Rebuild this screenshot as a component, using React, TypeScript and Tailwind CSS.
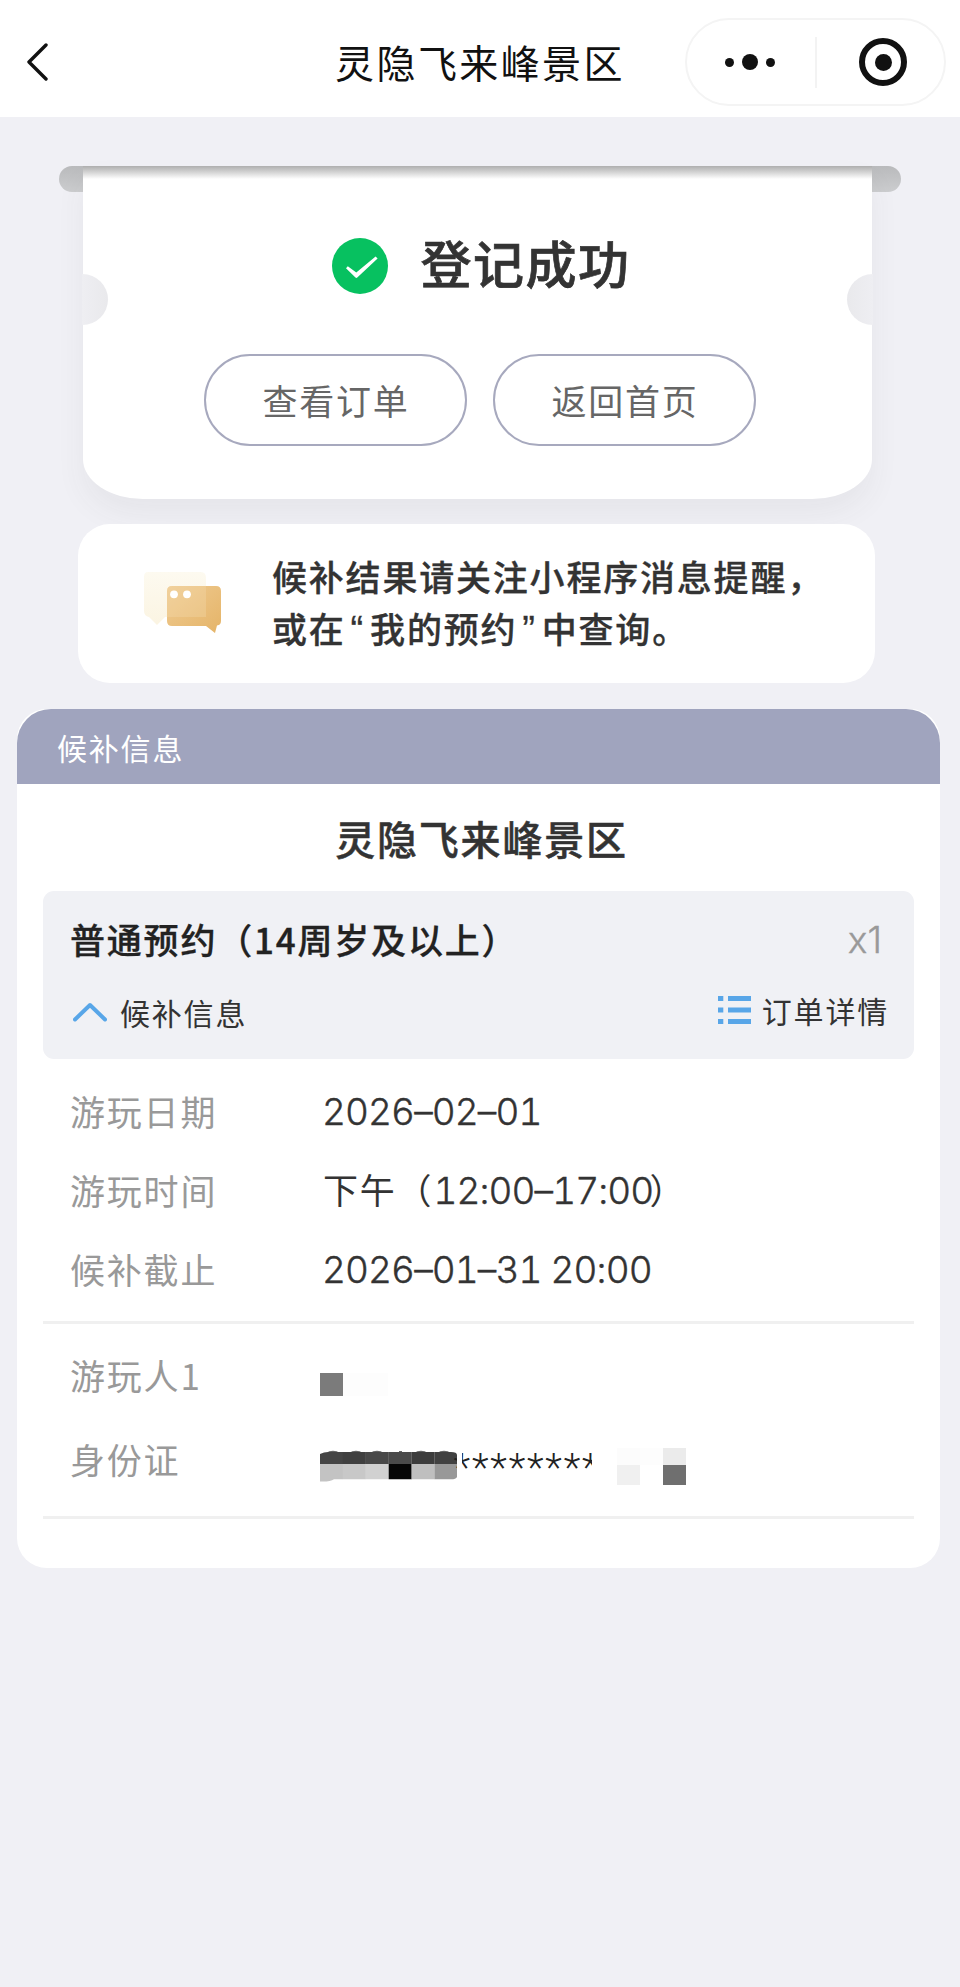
import React from "react";

interface RowProps {
  label: string;
  className: string;
  children: React.ReactNode;
}

const CheckIcon = () => (
  <svg className="size-14 shrink-0" viewBox="0 0 56 56" fill="none">
    <circle cx="28" cy="28" r="28" fill="#07c160" />
    <path d="M14 30.3L15.8 28.2L24.3 34.4L43.6 18.4L45.6 20.4L25.3 39.6Q24.2 40.3 23.2 39.3Z" fill="#fff" />
  </svg>
);

const ChatIcon = () => (
  <svg className="h-[66px] w-[80px] shrink-0" viewBox="0 0 80 66">
    <defs>
      <linearGradient id="bubble" x1="0" y1="0" x2="1" y2="1">
        <stop offset="0" stopColor="#efcb92" />
        <stop offset="1" stopColor="#e5b468" />
      </linearGradient>
      <linearGradient id="back" x1="0" y1="0" x2="0" y2="1">
        <stop offset="0" stopColor="#fdfaf0" />
        <stop offset="1" stopColor="#fbf4e2" />
      </linearGradient>
    </defs>
    <path d="M5 1H58Q63 1 63 7V46H22L14 54L6 46Q1 45 1 40V6Q1 1 5 1Z" fill="url(#back)" />
    <path d="M29 15H73Q78 15 78 20V50Q78 54 74 54.5L72 62L63 55H29Q24 55 24 50V20Q24 15 29 15Z" fill="url(#bubble)" />
    <path d="M29 15H63V46H24V20Q24 15 29 15Z" fill="#f6dfb2" opacity="0.3" />
    <circle cx="31" cy="23.3" r="3.9" fill="#fff" />
    <circle cx="44" cy="23.3" r="3.9" fill="#fff" />
  </svg>
);

const ListIcon = () => (
  <svg className="h-[30px] w-[33px]" viewBox="0 0 33 30" fill="#58a6e8">
    <path d="M0 1H5.3V6H0zM10 1H33V6H10zM0 12.5H5.3V17.5H0zM10 12.5H33V17.5H10zM0 24H5.3V29H0zM10 24H33V29H10z" />
  </svg>
);

const maskCells = [
  { top: "#454545", bottom: "#c3c3c3" },
  { top: "#404040", bottom: "#c8c8c8" },
  { top: "#494949", bottom: "#d1d1d1" },
  { top: "#4b4b4b", bottom: "#060606" },
  { top: "#3d3d3d", bottom: "#bfbfbf" },
  { top: "#414141", bottom: "#989898" },
];

const MaskLeft = () => (
  <svg className="h-[32px] w-[137px] shrink-0" viewBox="0 0 137 32">
    <clipPath id="mask">
      <path d="M0 4Q4 2 8 2H131Q137 2 137 5V27Q136 29.3 131 29.3H14Q10 32 0 31.5Z" />
    </clipPath>
    {[13, 36, 57, 101, 124].map((x) => (
      <ellipse key={x} cx={x} cy="2.4" rx="5" ry="1.7" fill="#666" />
    ))}
    <rect x="79" y="1" width="3" height="2" fill="#666" />
    <g clipPath="url(#mask)">
      {maskCells.map((cell, index) => (
        <g key={index}>
          <rect x={index * 22.9} y="0" width="23" height="14" fill={cell.top} />
          <rect x={index * 22.9} y="14" width="23" height="18" fill={cell.bottom} />
        </g>
      ))}
    </g>
  </svg>
);

const Row: React.FC<RowProps> = ({ label, className, children }) => (
  <div className={`flex items-center pl-[27px] ${className}`}>
    <span className="w-[253px] shrink-0 text-[#999]">{label}</span>
    {children}
  </div>
);

const num = "font-[Inter] text-[37px] font-light tabular-nums tracking-[-0.9px] [-webkit-text-stroke:0.4px]";
const quote = "px-[5px] font-['Liberation_Sans'] text-[38px] leading-none";

const App = () => {
  const details = [
    { label: "游玩日期", value: <span className={`-ml-px ${num}`}>2026–02–01</span> },
    { label: "游玩时间", value: <span>下午（<span className={num}>12:00–17:00</span><span className="-ml-1">）</span></span> },
    { label: "候补截止", value: <span className={`-ml-px ${num}`}>2026–01–31 20:00</span> },
  ];

  return (
    <div className="h-[1987px] w-[960px] overflow-hidden bg-[#f0f0f5] font-['Noto_Sans_CJK_SC',sans-serif] text-[35px] tracking-[1.8px] text-[#333]">
      <header className="relative flex h-[117px] items-center justify-center bg-white pt-1.5">
        <svg className="absolute top-[43px] left-[27px] h-[38px] w-[21px]" viewBox="0 0 21 38" fill="none">
          <path d="M19 2L2 19L19 36" stroke="#111" strokeWidth="3.4" strokeLinecap="round" strokeLinejoin="round" />
        </svg>
        <h1 className="text-[39px] tracking-[2.4px] text-[#111]">灵隐飞来峰景区</h1>
        <div className="absolute top-[18px] right-[14px] flex h-[88px] w-[261px] items-center rounded-full border-2 border-[#f4f4f4]">
          <div className="flex h-[51px] w-[130px] items-center justify-center gap-2 border-r-2 border-[#f3f3f3] pr-0.5">
            <i className="size-[9px] rounded-full bg-[#111]" />
            <i className="size-4 rounded-full bg-[#111]" />
            <i className="size-[9px] rounded-full bg-[#111]" />
          </div>
          <div className="ml-[42px] flex size-12 items-center justify-center rounded-full border-[6px] border-[#111]">
            <i className="size-[17px] rounded-full bg-[#111]" />
          </div>
        </div>
      </header>

      <section className="relative mx-auto mt-[49px] h-[333px] w-[842px]">
        <div className="absolute inset-x-0 top-0 h-[26px] rounded-full bg-linear-to-b from-[#b9babc] to-[#cccdcf]" />
        <div className="relative mr-[29px] ml-6 h-full rounded-b-[60px_40px] bg-white pt-[69px] shadow-[0_16px_30px_rgba(60,60,70,0.06)]">
          <div className="absolute inset-x-0 top-0 h-[13px] bg-linear-to-b from-[#aeaeae] to-white" />
          <div className="absolute top-[108px] -left-px h-[51px] w-[26px] rounded-r-full bg-linear-to-r from-[#eeeef2] to-[#e9e9ec]" />
          <div className="absolute top-[108px] -right-px h-[51px] w-[26px] rounded-l-full bg-linear-to-l from-[#eeeef2] to-[#e9e9ec]" />
          <div className="flex h-[62px] items-center justify-center gap-8 pl-2">
            <CheckIcon />
            <h2 className="-mt-2 text-[51px] leading-none font-medium tracking-[1.5px] [-webkit-text-stroke:0.7px]">登记成功</h2>
          </div>
          <div className="mt-[57px] flex justify-center gap-[26px] pl-[4px]">
            <button className="h-[92px] w-[263px] rounded-full border-2 border-[#a7a9be] pl-0.5 text-[#666]">查看订单</button>
            <button className="h-[92px] w-[263px] rounded-full border-2 border-[#a7a9be] pl-0.5 text-[#666]">返回首页</button>
          </div>
        </div>
      </section>

      <section className="relative mt-[25px] ml-[78px] flex h-[159px] w-[797px] items-center rounded-[32px] bg-white pl-[65px]">
        <ChatIcon />
        <p className="-mt-[3px] ml-[49px] leading-[52px] font-medium whitespace-nowrap [-webkit-text-stroke:0.3px]">
          候补结果请关注小程序消息提醒，
          <br />
          或在<span className={quote}>“</span>我的预约
          <span className={quote}>”</span>中查询。
        </p>
      </section>

      <main className="mt-[26px] ml-[17px] h-[859px] w-[923px] rounded-[30px] bg-white">
        <div className="flex h-[75px] items-center rounded-t-[34px] bg-[#a0a4be] pt-0.5 pl-10 text-[30px] text-white">
          候补信息
        </div>
        <div className="px-[26px]">
          <h2 className="flex h-[107px] items-center justify-center pl-1.5 text-[40px] font-medium tracking-[1.8px] [-webkit-text-stroke:0.5px]">灵隐飞来峰景区</h2>
          <div className="h-[168px] rounded-[11px] bg-[#f0f1f5] pr-7 pl-[27px] pt-[24px] text-[#222]">
            <div className="flex h-[48px] items-center justify-between font-medium">
              <span className="[-webkit-text-stroke:0.3px]">普通预约（14周岁及以上）</span>
              <span className="pt-0.5 pr-1 font-[Inter] text-[37px] font-light tracking-normal text-[#999] [-webkit-text-stroke:0.4px]">x1</span>
            </div>
            <div className="mt-[24px] flex h-[50px] items-center text-[30px] text-[#333]">
              <svg className="mr-[13px] ml-[3px] h-[20px] w-[34px]" viewBox="0 0 34 20" fill="none">
                <path d="M2 17.5L17 3L32 17.5" stroke="#58a6e8" strokeWidth="4" strokeLinecap="round" strokeLinejoin="round" />
              </svg>
              <span>候补信息</span>
              <span className="-mt-1 -mr-[3px] ml-auto flex items-center gap-[11px]">
                <ListIcon />
                订单详情
              </span>
            </div>
          </div>

          <div className="h-[265px] border-b-[3px] border-[#f0f0f0] pt-[13px]">
            {details.map((item) => (
              <Row key={item.label} label={item.label} className="h-[79px]">
                {item.value}
              </Row>
            ))}
          </div>

          <div className="h-[195px] border-b-[3px] border-[#f0f0f0] pt-[9px]">
            <Row label="游玩人1" className="h-[84px]">
              <span className="mt-[19px] -ml-[3px] size-[23px] bg-[#7b7b7b]" />
              <span className="mt-[19px] h-[23px] w-[45px] bg-[#fdfdfd]" />
            </Row>
            <Row label="身份证" className="h-[84px]">
              <div className="-ml-[3px] flex items-center pt-[14px]">
                <MaskLeft />
                <div className="relative -ml-[3px] flex h-[30px] w-[146px] items-center justify-center">
                  <span className="pt-[5px] font-[Roboto] text-[39px] leading-none font-light tracking-[1.8px] text-[#222]">********</span>
                  {/* redaction strokes over both ends of the number */}
                  <div className="absolute inset-y-0 left-[3px] w-[5px] bg-white" />
                  <div className="absolute inset-y-0 right-0 w-[8px] bg-white" />
                </div>
                <div className="ml-[17px] grid grid-cols-[23px_23px_23px] grid-rows-[17px_20px]">
                  <i className="bg-[#fcfcfc]" />
                  <i className="bg-[#fdfdfd]" />
                  <i className="bg-[#ebebeb]" />
                  <i className="bg-[#f0f0f0]" />
                  <i />
                  <i className="bg-[#6f6f6f]" />
                </div>
              </div>
            </Row>
          </div>
        </div>
      </main>
    </div>
  );
};

export default App;
